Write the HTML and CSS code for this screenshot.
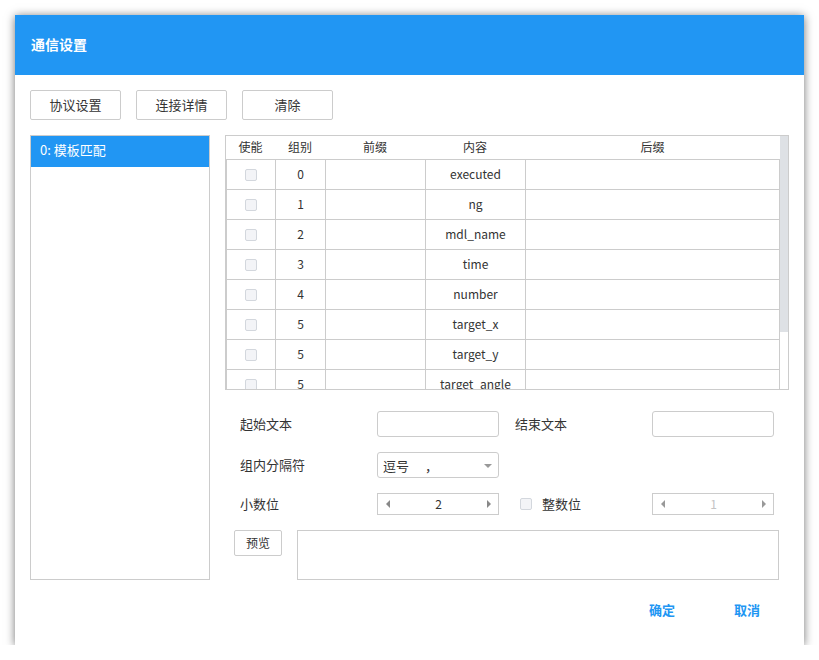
FILE: index.html
```html
<!DOCTYPE html>
<html lang="zh-CN">
<head>
<meta charset="utf-8">
<title>通信设置</title>
<link rel="stylesheet" href="styles.css">
</head>
<body>
<div class="dialog">
  <div class="dlg-head"><span class="dlg-title">通信设置</span></div>
  <div class="dlg-body">
    <div class="toolbar">
      <button class="btn">协议设置</button>
      <button class="btn">连接详情</button>
      <button class="btn">清除</button>
    </div>
    <div class="main">
      <div class="list">
        <div class="list-item active">0: 模板匹配</div>
      </div>
      <div class="right">
        <div class="grid">
          <div class="grid-view">
            <table class="tbl">
              <colgroup>
                <col class="c1"><col class="c2"><col class="c3"><col class="c4"><col class="c5">
              </colgroup>
              <thead>
                <tr><th>使能</th><th>组别</th><th>前缀</th><th>内容</th><th>后缀</th></tr>
              </thead>
              <tbody>
                <tr><td><span class="chk"></span></td><td>0</td><td></td><td>executed</td><td class="last"></td></tr>
                <tr><td><span class="chk"></span></td><td>1</td><td></td><td>ng</td><td class="last"></td></tr>
                <tr><td><span class="chk"></span></td><td>2</td><td></td><td>mdl_name</td><td class="last"></td></tr>
                <tr><td><span class="chk"></span></td><td>3</td><td></td><td>time</td><td class="last"></td></tr>
                <tr><td><span class="chk"></span></td><td>4</td><td></td><td>number</td><td class="last"></td></tr>
                <tr><td><span class="chk"></span></td><td>5</td><td></td><td>target_x</td><td class="last"></td></tr>
                <tr><td><span class="chk"></span></td><td>5</td><td></td><td>target_y</td><td class="last"></td></tr>
                <tr><td><span class="chk"></span></td><td>5</td><td></td><td>target_angle</td><td class="last"></td></tr>
              </tbody>
            </table>
          </div>
          <div class="vscroll"><div class="thumb"></div></div>
        </div>
        <div class="form">
          <div class="frow r1">
            <span class="lbl">起始文本</span>
            <input class="inp" type="text">
            <span class="lbl lbl2">结束文本</span>
            <input class="inp inp2" type="text">
          </div>
          <div class="frow r2">
            <span class="lbl">组内分隔符</span>
            <div class="select"><span>逗号</span><span class="comma">，</span><i class="caret"></i></div>
          </div>
          <div class="frow r3">
            <span class="lbl">小数位</span>
            <div class="spin"><i class="arr-l"></i><span class="val">2</span><i class="arr-r"></i></div>
            <span class="chk chk-int"></span>
            <span class="lbl-int">整数位</span>
            <div class="spin spin2 disabled"><i class="arr-l"></i><span class="val">1</span><i class="arr-r"></i></div>
          </div>
          <div class="frow r4">
            <button class="btn btn-sm">预览</button>
            <div class="preview"></div>
          </div>
        </div>
      </div>
    </div>
    <div class="footer">
      <button class="link-btn">确定</button>
      <button class="link-btn">取消</button>
    </div>
  </div>
</div>
</body>
</html>
```
FILE: styles.css
```css
* { box-sizing: border-box; }
html, body { margin: 0; padding: 0; background: #fff; }
body {
  font-family: "Microsoft YaHei", "Noto Sans CJK SC", "Noto Sans", sans-serif;
  color: #333;
  font-size: 13px;
}
.dialog {
  margin: 15px 0 0 15px;
  width: 789px;
  height: 630px;
  background: #fff;
  box-shadow: 0 1px 9px rgba(0, 0, 0, 0.55);
  display: flex;
  flex-direction: column;
}
.dlg-head {
  height: 60px;
  background: #2196f3;
  display: flex;
  align-items: center;
  padding-left: 16px;
  padding-bottom: 2px;
}
.dlg-title {
  color: #fff;
  font-weight: bold;
  font-size: 14px;
  line-height: 20px;
}
.dlg-body {
  padding: 15px 15px 0 15px;
  display: flex;
  flex-direction: column;
}
.toolbar {
  display: flex;
  gap: 15px;
  height: 30px;
}
.btn {
  width: 91px;
  height: 30px;
  border: 1px solid #cccccc;
  border-radius: 2px;
  background: #fff;
  font-family: inherit;
  font-size: 13px;
  color: #333;
  padding: 0 0 1px 0;
  line-height: 27px;
}
.main {
  margin-top: 15px;
  display: flex;
  gap: 15px;
  height: 445px;
}
.list {
  width: 180px;
  height: 445px;
  border: 1px solid #cccccc;
}
.list-item {
  height: 31px;
  line-height: 28px;
  padding-left: 9px;
  padding-bottom: 3px;
  font-size: 13px;
}
.list-item.active {
  background: #2196f3;
  color: #fff;
}
.right {
  width: 564px;
  display: flex;
  flex-direction: column;
}
.grid {
  height: 255px;
  border: 1px solid #cccccc;
  display: flex;
}
.grid-view {
  width: 554px;
  height: 253px;
  overflow: hidden;
}
.tbl {
  table-layout: fixed;
  border-collapse: separate;
  border-spacing: 0;
  width: 554px;
  font-size: 12px;
}
.tbl .c1 { width: 49px; }
.tbl .c2 { width: 50px; }
.tbl .c3 { width: 100px; }
.tbl .c4 { width: 100px; }
.tbl .c5 { width: 255px; }
.tbl th {
  height: 24px;
  font-weight: normal;
  border-bottom: 1px solid #cccccc;
  padding: 0 0 1px 0;
  text-align: center;
  line-height: 20px;
  color: #333;
}
.tbl td {
  height: 30px;
  padding: 0 0 2px 0;
  border-left: 1px solid #cccccc;
  border-bottom: 1px solid #cccccc;
  text-align: center;
  vertical-align: middle;
  line-height: 26px;
  color: #333;
}
.tbl td.last { border-right: 1px solid #cccccc; }
.chk {
  display: inline-block;
  width: 12px;
  height: 12px;
  border: 1px solid #d3d7dd;
  border-radius: 2px;
  background: #f3f4f7;
  vertical-align: middle;
}
.vscroll {
  width: 8px;
  height: 253px;
  background: #fff;
}
.thumb {
  height: 196px;
  background: #dee1e5;
}
.form {
  margin-top: 21px;
  display: flex;
  flex-direction: column;
  gap: 15px;
}
.frow {
  display: flex;
  align-items: center;
}
.r1, .r2 { height: 26px; padding-left: 15px; }
.r3 { height: 22px; padding-left: 15px; }
.lbl {
  width: 137px;
  font-size: 13px;
  line-height: 18px;
}
.lbl2 { margin-left: 16px; }
.inp {
  width: 122px;
  height: 26px;
  border: 1px solid #cccccc;
  border-radius: 3px;
  margin: 0;
  padding: 0 5px;
  font-family: inherit;
  outline: none;
}
.inp2 { width: 122px; }
.select {
  width: 122px;
  height: 26px;
  border: 1px solid #cccccc;
  border-radius: 3px;
  display: flex;
  align-items: center;
  padding-left: 5px;
  position: relative;
  font-size: 13px;
}
.comma { margin-left: 16px; }
.caret {
  position: absolute;
  right: 6px;
  top: 11px;
  width: 0;
  height: 0;
  border-left: 4px solid transparent;
  border-right: 4px solid transparent;
  border-top: 4px solid #999;
}
.spin {
  width: 122px;
  height: 22px;
  border: 1px solid #cccccc;
  display: flex;
  align-items: center;
  justify-content: space-between;
  padding: 0 7px 0 8px;
  font-size: 12px;
}
.spin .val { line-height: 18px; }
.arr-l {
  width: 0; height: 0;
  border-top: 4px solid transparent;
  border-bottom: 4px solid transparent;
  border-right: 4px solid #888;
}
.arr-r {
  width: 0; height: 0;
  border-top: 4px solid transparent;
  border-bottom: 4px solid transparent;
  border-left: 4px solid #888;
}
.spin.disabled .val { color: #c4c4c4; }
.spin.disabled .arr-l { border-right-color: #999; }
.spin.disabled .arr-r { border-left-color: #999; }
.chk-int { margin-left: 21px; }
.lbl-int {
  margin-left: 10px;
  width: 110px;
  font-size: 13px;
  line-height: 18px;
}
.r4 {
  align-items: flex-start;
  padding-left: 9px;
  gap: 15px;
}
.btn-sm {
  width: 48px;
  height: 26px;
  line-height: 23px;
  font-size: 12px;
}
.preview {
  width: 482px;
  height: 50px;
  border: 1px solid #cccccc;
}
.footer {
  display: flex;
  justify-content: flex-end;
  gap: 15px;
  padding-top: 14px;
  padding-right: 7px;
}
.link-btn {
  width: 70px;
  height: 30px;
  border: none;
  background: transparent;
  color: #2196f3;
  font-weight: bold;
  font-family: inherit;
  font-size: 13px;
  padding: 0;
}
```
